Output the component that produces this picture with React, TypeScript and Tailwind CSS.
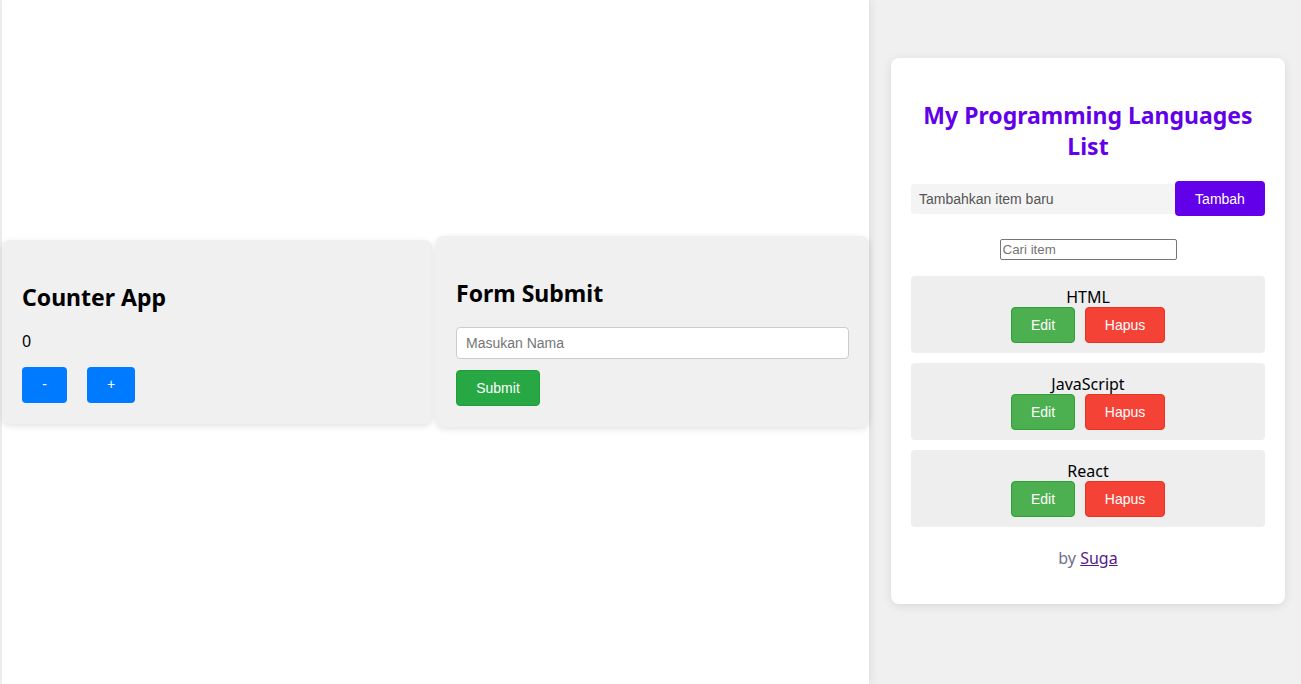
import { useState } from "react";

const ui = "font-['Segoe_UI','Noto_Sans',sans-serif]";
const arial = "font-['Liberation_Sans',Arial,sans-serif]";

const initialItems = ["HTML", "JavaScript", "React"];

function CounterCard() {
  const [count, setCount] = useState(0);
  return (
    <div className="w-[430px] shrink-0 rounded-lg bg-[#f0f0f0] px-5 pt-5 pb-[21px] shadow-[0_2px_6px_rgba(0,0,0,0.12)]">
      <h2 className="mt-[22px] text-[23px] font-bold leading-[31px] text-black">Counter App</h2>
      <p className="mt-[18px] text-[16px] leading-[21px] text-black">{count}</p>
      <div className="mt-[15px] flex gap-5">
        <button
          onClick={() => setCount(count - 1)}
          className={`${arial} h-[36px] w-[45px] rounded bg-[#007bff] text-[14px] text-white`}
        >
          -
        </button>
        <button
          onClick={() => setCount(count + 1)}
          className={`${arial} h-[36px] w-[48px] rounded bg-[#007bff] text-[14px] text-white`}
        >
          +
        </button>
      </div>
    </div>
  );
}

function FormCard() {
  const [name, setName] = useState("");
  return (
    <div className="w-[433px] shrink-0 rounded-lg bg-[#f0f0f0] px-5 pt-5 pb-[21px] shadow-[0_2px_6px_rgba(0,0,0,0.12)]">
      <h2 className="mt-[22px] text-[23px] font-bold leading-[31px] text-black">Form Submit</h2>
      <input
        value={name}
        onChange={(e) => setName(e.target.value)}
        placeholder="Masukan Nama"
        className={`${arial} mt-[18px] block h-[32px] w-full rounded border border-[#cccccc] bg-white px-[9px] text-[14px] text-black outline-none placeholder:text-[#757575]`}
      />
      <button
        className={`${arial} mt-[11px] block h-[36px] w-[84px] rounded border border-[#1e9e3a] bg-[#28a745] text-[14px] text-white`}
      >
        Submit
      </button>
    </div>
  );
}

function ListCard() {
  const [items, setItems] = useState(initialItems);
  const [text, setText] = useState("");
  const [query, setQuery] = useState("");

  const shown = items.filter((i) => i.toLowerCase().includes(query.toLowerCase()));

  return (
    <div className={`${ui} rounded-lg bg-white px-5 pt-5 pb-5 shadow-[0_2px_10px_rgba(0,0,0,0.1)]`}>
      <h2 className="mt-[22px] mb-[19px] text-center text-[23px] font-bold leading-[31px] text-[#6200ea]">
        My Programming Languages List
      </h2>

      <div className="flex h-[35px] items-center">
        <input
          value={text}
          onChange={(e) => setText(e.target.value)}
          placeholder="Tambahkan item baru"
          className={`${arial} h-[30px] min-w-0 flex-1 rounded-l bg-[#f4f4f4] px-2 text-[14px] text-black outline-none placeholder:text-[#555555]`}
        />
        <button
          onClick={() => {
            if (text.trim()) setItems([...items, text.trim()]);
            setText("");
          }}
          className={`${arial} h-[35px] w-[90px] rounded bg-[#6200ea] pt-[2px] text-[14px] text-white`}
        >
          Tambah
        </button>
      </div>

      <div className="mt-[23px] flex justify-center">
        <input
          value={query}
          onChange={(e) => setQuery(e.target.value)}
          placeholder="Cari item"
          className={`${arial} h-[21px] w-[177px] rounded-[2px] border border-[#767676] px-[2px] text-[13.33px] text-black outline-none placeholder:text-[#757575]`}
        />
      </div>

      <ul className="mt-4 flex flex-col gap-[10px]">
        {shown.map((item) => (
          <li key={item} className="flex flex-col items-center rounded bg-[#eeeeee] p-[10px]">
            <span className="pt-[1px] text-[16px] leading-[20px] text-black">{item}</span>
            <div className="flex gap-[10px]">
              <button
                className={`${arial} h-[36px] w-[64px] rounded border border-[#2ea035] bg-[#4caf50] text-[14px] text-white`}
              >
                Edit
              </button>
              <button
                onClick={() => setItems(items.filter((i) => i !== item))}
                className={`${arial} h-[36px] w-[80px] rounded border border-[#e8341c] bg-[#f44336] text-[14px] text-white`}
              >
                Hapus
              </button>
            </div>
          </li>
        ))}
      </ul>

      <p className="mt-[21px] mb-[15px] text-center text-[16px] leading-[21px] text-[#70708a]">
        by{" "}
        <a href="#" className="text-[#551a8b] underline">
          Suga
        </a>
      </p>
    </div>
  );
}

export default function App() {
  return (
    <div className={`${ui} flex h-[684px] w-full overflow-hidden bg-[#f0f0f0]`}>
      {/* left: counter + form */}
      <div className="ml-[2px] flex h-full w-[867px] shrink-0 items-center gap-[4px] bg-white pb-[21px] shadow-[2px_0_8px_rgba(0,0,0,0.08)]">
        <CounterCard />
        <FormCard />
      </div>

      {/* right: list */}
      <div className="flex-1 pt-[58px] pl-[22px] pr-4">
        <ListCard />
      </div>
    </div>
  );
}
